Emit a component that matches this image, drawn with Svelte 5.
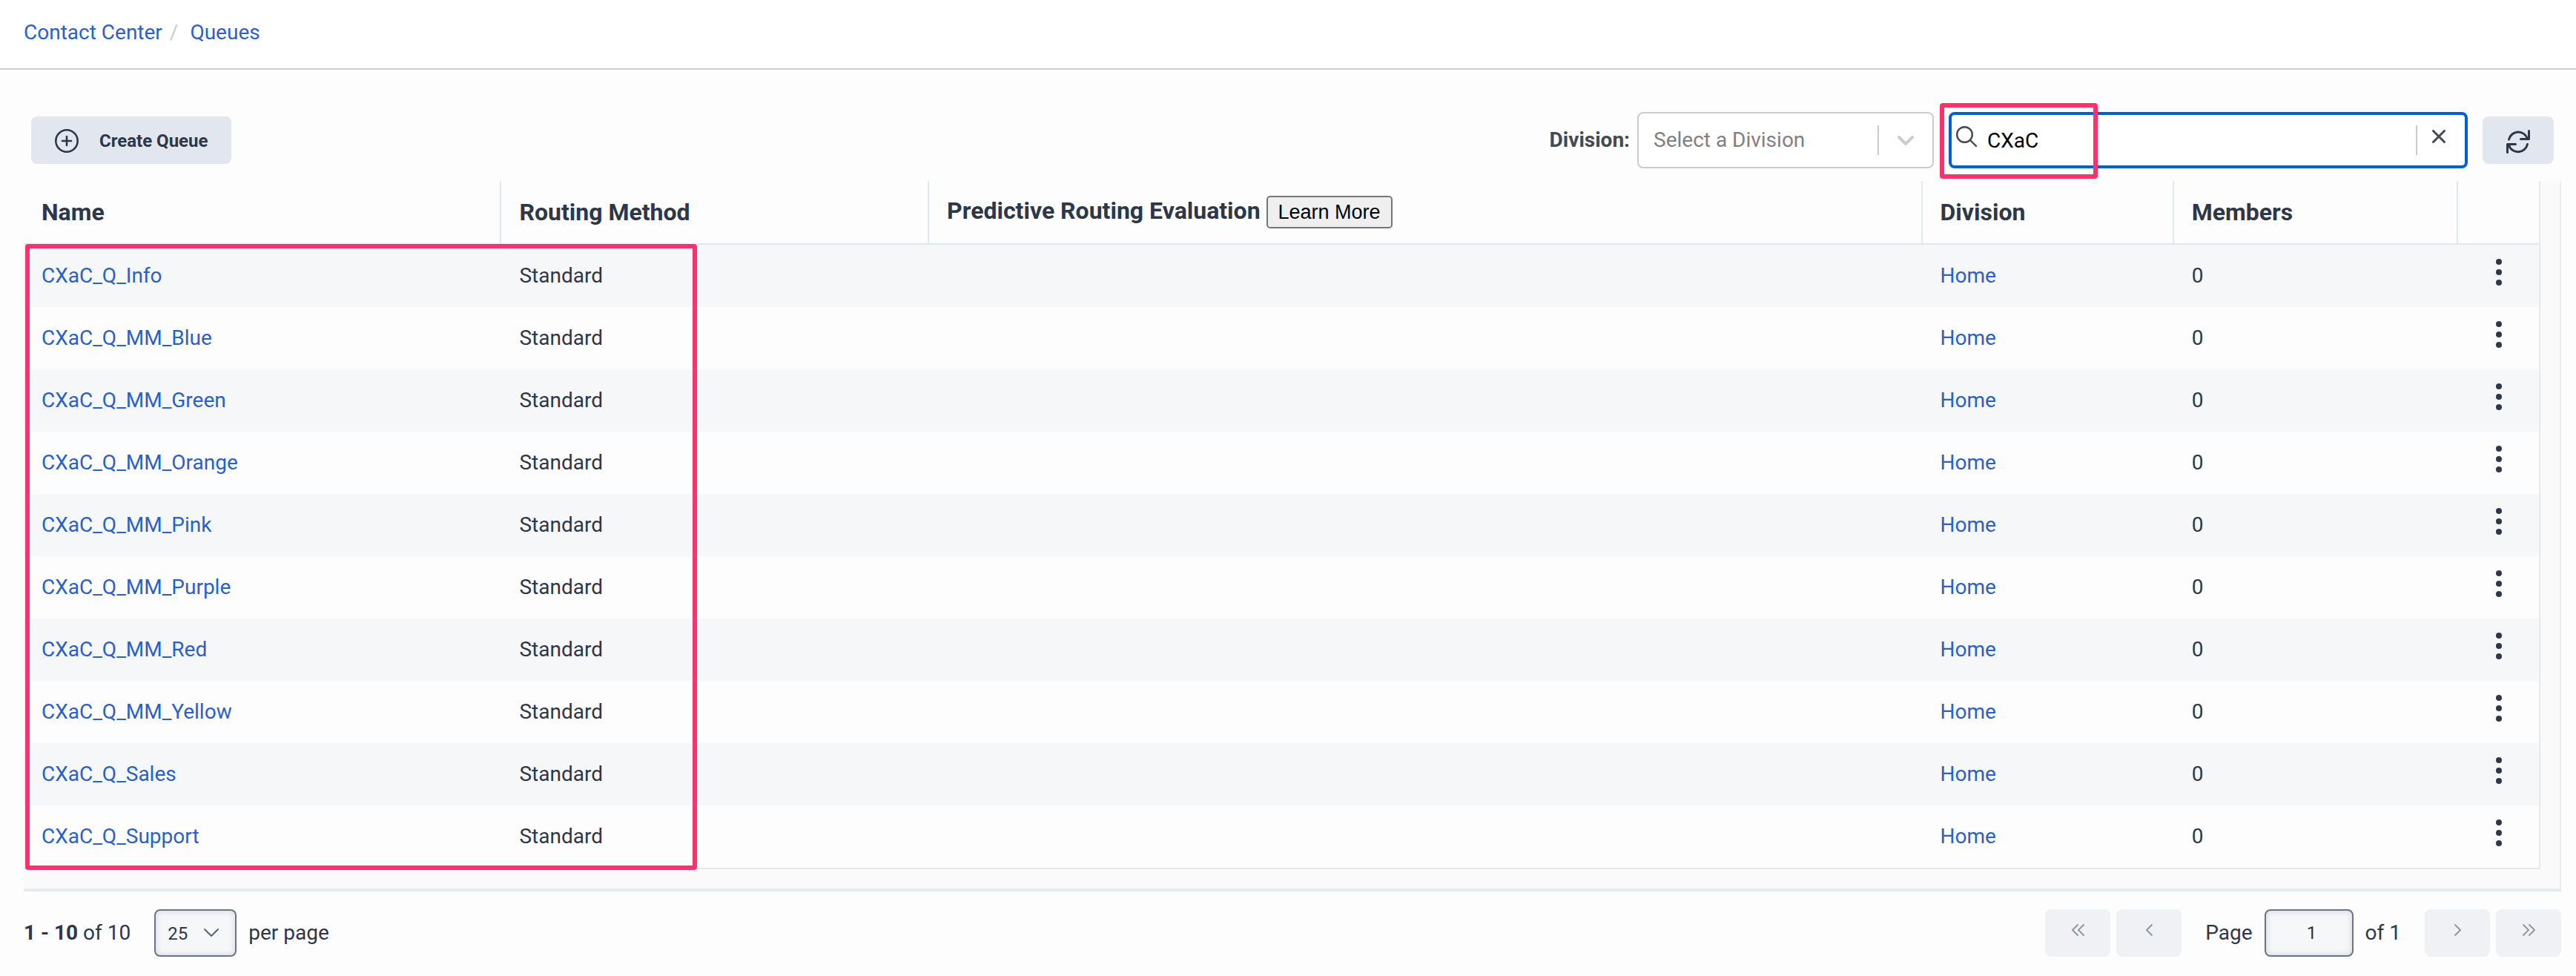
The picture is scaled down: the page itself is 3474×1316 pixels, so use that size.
<script>
  const queues = ['Info', 'MM_Blue', 'MM_Green', 'MM_Orange', 'MM_Pink', 'MM_Purple', 'MM_Red', 'MM_Yellow', 'Sales', 'Support'].map(
    (n) => ({ name: `CXaC_Q_${n}`, method: 'Standard', division: 'Home', members: 0 })
  );
  let search = $state('CXaC');
  let page = $state('1');
  let perPage = $state('25');
  let division = $state('');
</script>

{#snippet chevrons(d)}
  <svg class="chev" viewBox="0 0 24 24" aria-hidden="true"><path {d} /></svg>
{/snippet}

<div class="page">
  <header>
    <nav aria-label="Breadcrumb">
      <a href="#contact-center">Contact Center</a><span class="slash">/</span><a href="#queues">Queues</a>
    </nav>
  </header>

  <main>
    <div class="toolbar">
      <button class="create" type="button">
        <svg viewBox="0 0 32 32" aria-hidden="true"><circle cx="16" cy="16" r="14.7" /><path d="M16 10v12M10 16h12" /></svg>
        <span>Create Queue</span>
      </button>
      <div class="filters">
        <label class="divlabel" for="division">Division:</label>
        <div class="selectbox">
          <select id="division" bind:value={division}>
            <option value="">Select a Division</option>
            <option value="home">Home</option>
          </select>
          <span class="rule"></span>
          <svg class="arrow" viewBox="0 0 40 40" aria-hidden="true"><path d="M11 16l9 9 9-9" /></svg>
        </div>
        <div class="search">
          <svg class="glass" viewBox="0 0 28 28" aria-hidden="true"><circle cx="11.5" cy="11.5" r="10.3" /><path d="M19 19l8 8" /></svg>
          <input type="text" aria-label="Search queues" bind:value={search} />
          <span class="rule"></span>
          <button type="button" class="clear" aria-label="Clear search" onclick={() => (search = '')}>
            <svg viewBox="0 0 18 18" aria-hidden="true"><path d="M1.5 1.5l15 15M16.5 1.5l-15 15" /></svg>
          </button>
          <span class="mark mark-search"></span>
        </div>
        <button type="button" class="refresh" aria-label="Refresh">
          <svg viewBox="0 0 32 32" aria-hidden="true">
            <path d="M3.5 13A13 13 0 0 1 28.5 12M30.5 1.5v11h-11M28.5 19.5A13 13 0 0 1 3.5 21M1.5 30.5v-11h11" />
          </svg>
        </button>
      </div>
    </div>

    <div class="scroller">
      <table>
        <colgroup><col class="c1" /><col class="c2" /><col class="c3" /><col class="c4" /><col class="c5" /><col class="c6" /></colgroup>
        <thead>
          <tr>
            <th>Name</th>
            <th>Routing Method</th>
            <th>Predictive Routing Evaluation <button type="button" class="learn">Learn More</button></th>
            <th>Division</th>
            <th>Members</th>
            <th aria-label="Actions"></th>
          </tr>
        </thead>
        <tbody>
          {#each queues as q}
            <tr>
              <td><a href="#{q.name}">{q.name}</a></td>
              <td>{q.method}</td>
              <td></td>
              <td><a href="#home">{q.division}</a></td>
              <td>{q.members}</td>
              <td class="actions">
                <button type="button" aria-label="Actions for {q.name}">
                  <svg viewBox="0 0 8 36" aria-hidden="true"><circle cx="4" cy="4" r="4" /><circle cx="4" cy="18" r="4" /><circle cx="4" cy="32" r="4" /></svg>
                </button>
              </td>
            </tr>
          {/each}
        </tbody>
      </table>
      <span class="mark mark-rows"></span>
    </div>

    <footer>
      <div class="left">
        <span class="count"><b>1 - 10</b> of 10</span>
        <span class="per">
          <select id="per" bind:value={perPage}><option>25</option><option>50</option><option>100</option></select>
          <svg viewBox="0 0 22 14" aria-hidden="true"><path d="M2 2l9 9 9-9" /></svg>
        </span>
        <label for="per">per page</label>
      </div>
      <div class="right">
        <button type="button" class="pg" disabled aria-label="First page">{@render chevrons('M12 5l-7 7 7 7M20 5l-7 7 7 7')}</button>
        <button type="button" class="pg" disabled aria-label="Previous page">{@render chevrons('M16 5l-7 7 7 7')}</button>
        <label class="pagelabel" for="page">Page</label>
        <input id="page" type="text" bind:value={page} />
        <span class="of">of 1</span>
        <button type="button" class="pg" disabled aria-label="Next page">{@render chevrons('M9 5l7 7-7 7')}</button>
        <button type="button" class="pg" disabled aria-label="Last page">{@render chevrons('M5 5l7 7-7 7M13 5l7 7-7 7')}</button>
      </div>
    </footer>
  </main>
</div>

<style>
  :global(body) {
    margin: 0;
    background: #fdfdfd;
  }
  .page {
    font-family: Roboto, 'Liberation Sans', sans-serif;
    font-size: 28px;
    line-height: 32px;
    color: #2d374a;
    min-height: 100vh;
    background: #fdfdfd;
  }
  * {
    box-sizing: border-box;
  }
  a {
    color: #2a60c8;
    text-decoration: none;
  }
  button,
  input,
  select {
    font: inherit;
    color: inherit;
    margin: 0;
    padding: 0;
    border: 0;
    background: none;
    appearance: none;
    outline: none;
  }
  svg {
    display: block;
    fill: none;
    stroke: currentColor;
    stroke-linecap: round;
    stroke-linejoin: round;
  }
  header {
    background: #fff;
    border-bottom: 2px solid #ccc;
    padding: 28px 32px 32px;
  }
  .slash {
    color: #ccc;
    margin: 0 16px 0 10px;
  }
  main {
    padding: 57px 20px 0 32px;
  }
  .toolbar {
    display: flex;
    align-items: center;
    justify-content: space-between;
    padding: 0 10px 0 10px;
    height: 76px;
  }
  .create {
    display: flex;
    align-items: center;
    gap: 28px;
    height: 64px;
    padding: 2px 32px 0;
    border-radius: 8px;
    background: #e2e6ee;
    font-size: 24px;
    font-weight: 700;
  }
  .create svg {
    width: 32px;
    height: 32px;
    stroke-width: 2.6;
  }
  .filters {
    display: flex;
    align-items: center;
  }
  .divlabel {
    font-weight: 700;
    color: #444a52;
    margin-right: 10px;
  }
  .selectbox {
    position: relative;
    display: flex;
    align-items: center;
    width: 400px;
    height: 76px;
    border: 2px solid #ccc;
    border-radius: 8px;
    background: #fff;
    color: #808080;
  }
  .selectbox select {
    flex: 1;
    height: 100%;
    padding-left: 20px;
  }
  .rule {
    width: 2px;
    height: 40px;
    background: #ccc;
  }
  .arrow {
    width: 40px;
    height: 40px;
    margin: 0 16px;
    color: #ccc;
    stroke-width: 4;
  }
  .search {
    position: relative;
    display: flex;
    align-items: center;
    width: 700px;
    height: 76px;
    margin: 0 20px;
    border: 4px solid #0060d1;
    border-radius: 8px;
    background: #fff;
  }
  .glass {
    width: 28px;
    height: 28px;
    margin: 0 14px 10px 6px;
    color: #444a52;
    stroke-width: 2.4;
  }
  .search input {
    flex: 1;
    min-width: 0;
    height: 100%;
    color: #000;
  }
  .clear {
    width: 64px;
    height: 100%;
    color: #444a52;
  }
  .clear svg {
    width: 18px;
    height: 18px;
    margin: 0 0 10px 20px;
    stroke-width: 3;
  }
  .refresh {
    display: flex;
    align-items: center;
    justify-content: center;
    width: 96px;
    height: 64px;
    padding-top: 4px;
    border-radius: 8px;
    background: #e2e6ee;
  }
  .refresh svg {
    width: 32px;
    height: 32px;
    stroke-width: 3;
  }
  .mark {
    position: absolute;
    border: 6px solid #fe316c;
    border-radius: 4px;
    pointer-events: none;
  }
  .mark-search {
    left: -16px;
    top: -16px;
    width: 213px;
    height: 102px;
  }
  .mark-rows {
    left: 2px;
    top: 85px;
    width: 906px;
    height: 844px;
  }
  .scroller {
    position: relative;
    margin-top: 17px;
    padding: 0 26px 26px 0;
    background: #fafafa;
    border-right: 2px solid #ececec;
    border-bottom: 2px solid #ececec;
  }
  table {
    width: 100%;
    table-layout: fixed;
    border-collapse: separate;
    border-spacing: 0;
    background: #fdfdfd;
    border-right: 2px solid #e8e8e8;
    border-bottom: 2px solid #e8e8e8;
  }
  .c1 { width: 19%; }
  .c2 { width: 17%; }
  .c4 { width: 10%; }
  .c5 { width: 11.3%; }
  .c6 { width: 109px; }
  th {
    height: 86px;
    padding: 0 22px 0 24px;
    text-align: left;
    font-size: 32px;
    font-weight: 700;
    border-bottom: 2px solid #e1e7ee;
    border-right: 2px solid #e1e7ee;
  }
  th:last-child {
    border-right: 0;
  }
  .learn {
    padding: 4px 14px;
    border: 2px solid #767676;
    border-radius: 5px;
    background: #efefef;
    color: #000;
    font-family: 'Liberation Sans', sans-serif;
    font-size: 27px;
    font-weight: 400;
  }
  td {
    height: 84px;
    padding: 0 24px;
  }
  tbody tr:nth-child(odd) td {
    background: #f5f7f9;
  }
  td.actions {
    padding: 0 48px 10px 51px;
  }
  td.actions button {
    display: block;
  }
  td.actions svg {
    width: 8px;
    height: 36px;
    fill: currentColor;
    stroke: none;
  }
  footer {
    display: flex;
    align-items: center;
    justify-content: space-between;
    border-top: 2px solid #e3e7ef;
    padding-top: 24px;
  }
  .left,
  .right {
    display: flex;
    align-items: center;
  }
  .per {
    position: relative;
    margin: 0 16px 0 32px;
    width: 111px;
  }
  .per select,
  .right input {
    width: 100%;
    height: 64px;
    border: 2px solid #6b7486;
    border-radius: 8px;
    background: #f5f7f9;
    box-shadow: inset 0 0 8px rgba(107, 116, 134, 0.25);
    font-size: 24px;
  }
  .per select {
    display: block;
    padding: 2px 0 0 16px;
  }
  .per svg {
    position: absolute;
    right: 23px;
    top: 25px;
    width: 22px;
    height: 14px;
    color: #5a6376;
    stroke-width: 2;
    pointer-events: none;
  }
  .right input {
    width: 120px;
    padding-left: 8px;
    text-align: center;
  }
  .pagelabel {
    margin: 0 16px 0 24px;
  }
  .of {
    margin: 0 32px 0 16px;
  }
  .pg {
    display: flex;
    justify-content: center;
    align-items: center;
    width: 88px;
    height: 64px;
    padding-bottom: 8px;
    border-radius: 8px;
    background: #eff1f5;
    color: #9197a5;
    margin-right: 8px;
  }
  .pg:last-child {
    margin-right: 0;
  }
  .chev {
    width: 24px;
    height: 24px;
    stroke-width: 2;
  }
</style>
